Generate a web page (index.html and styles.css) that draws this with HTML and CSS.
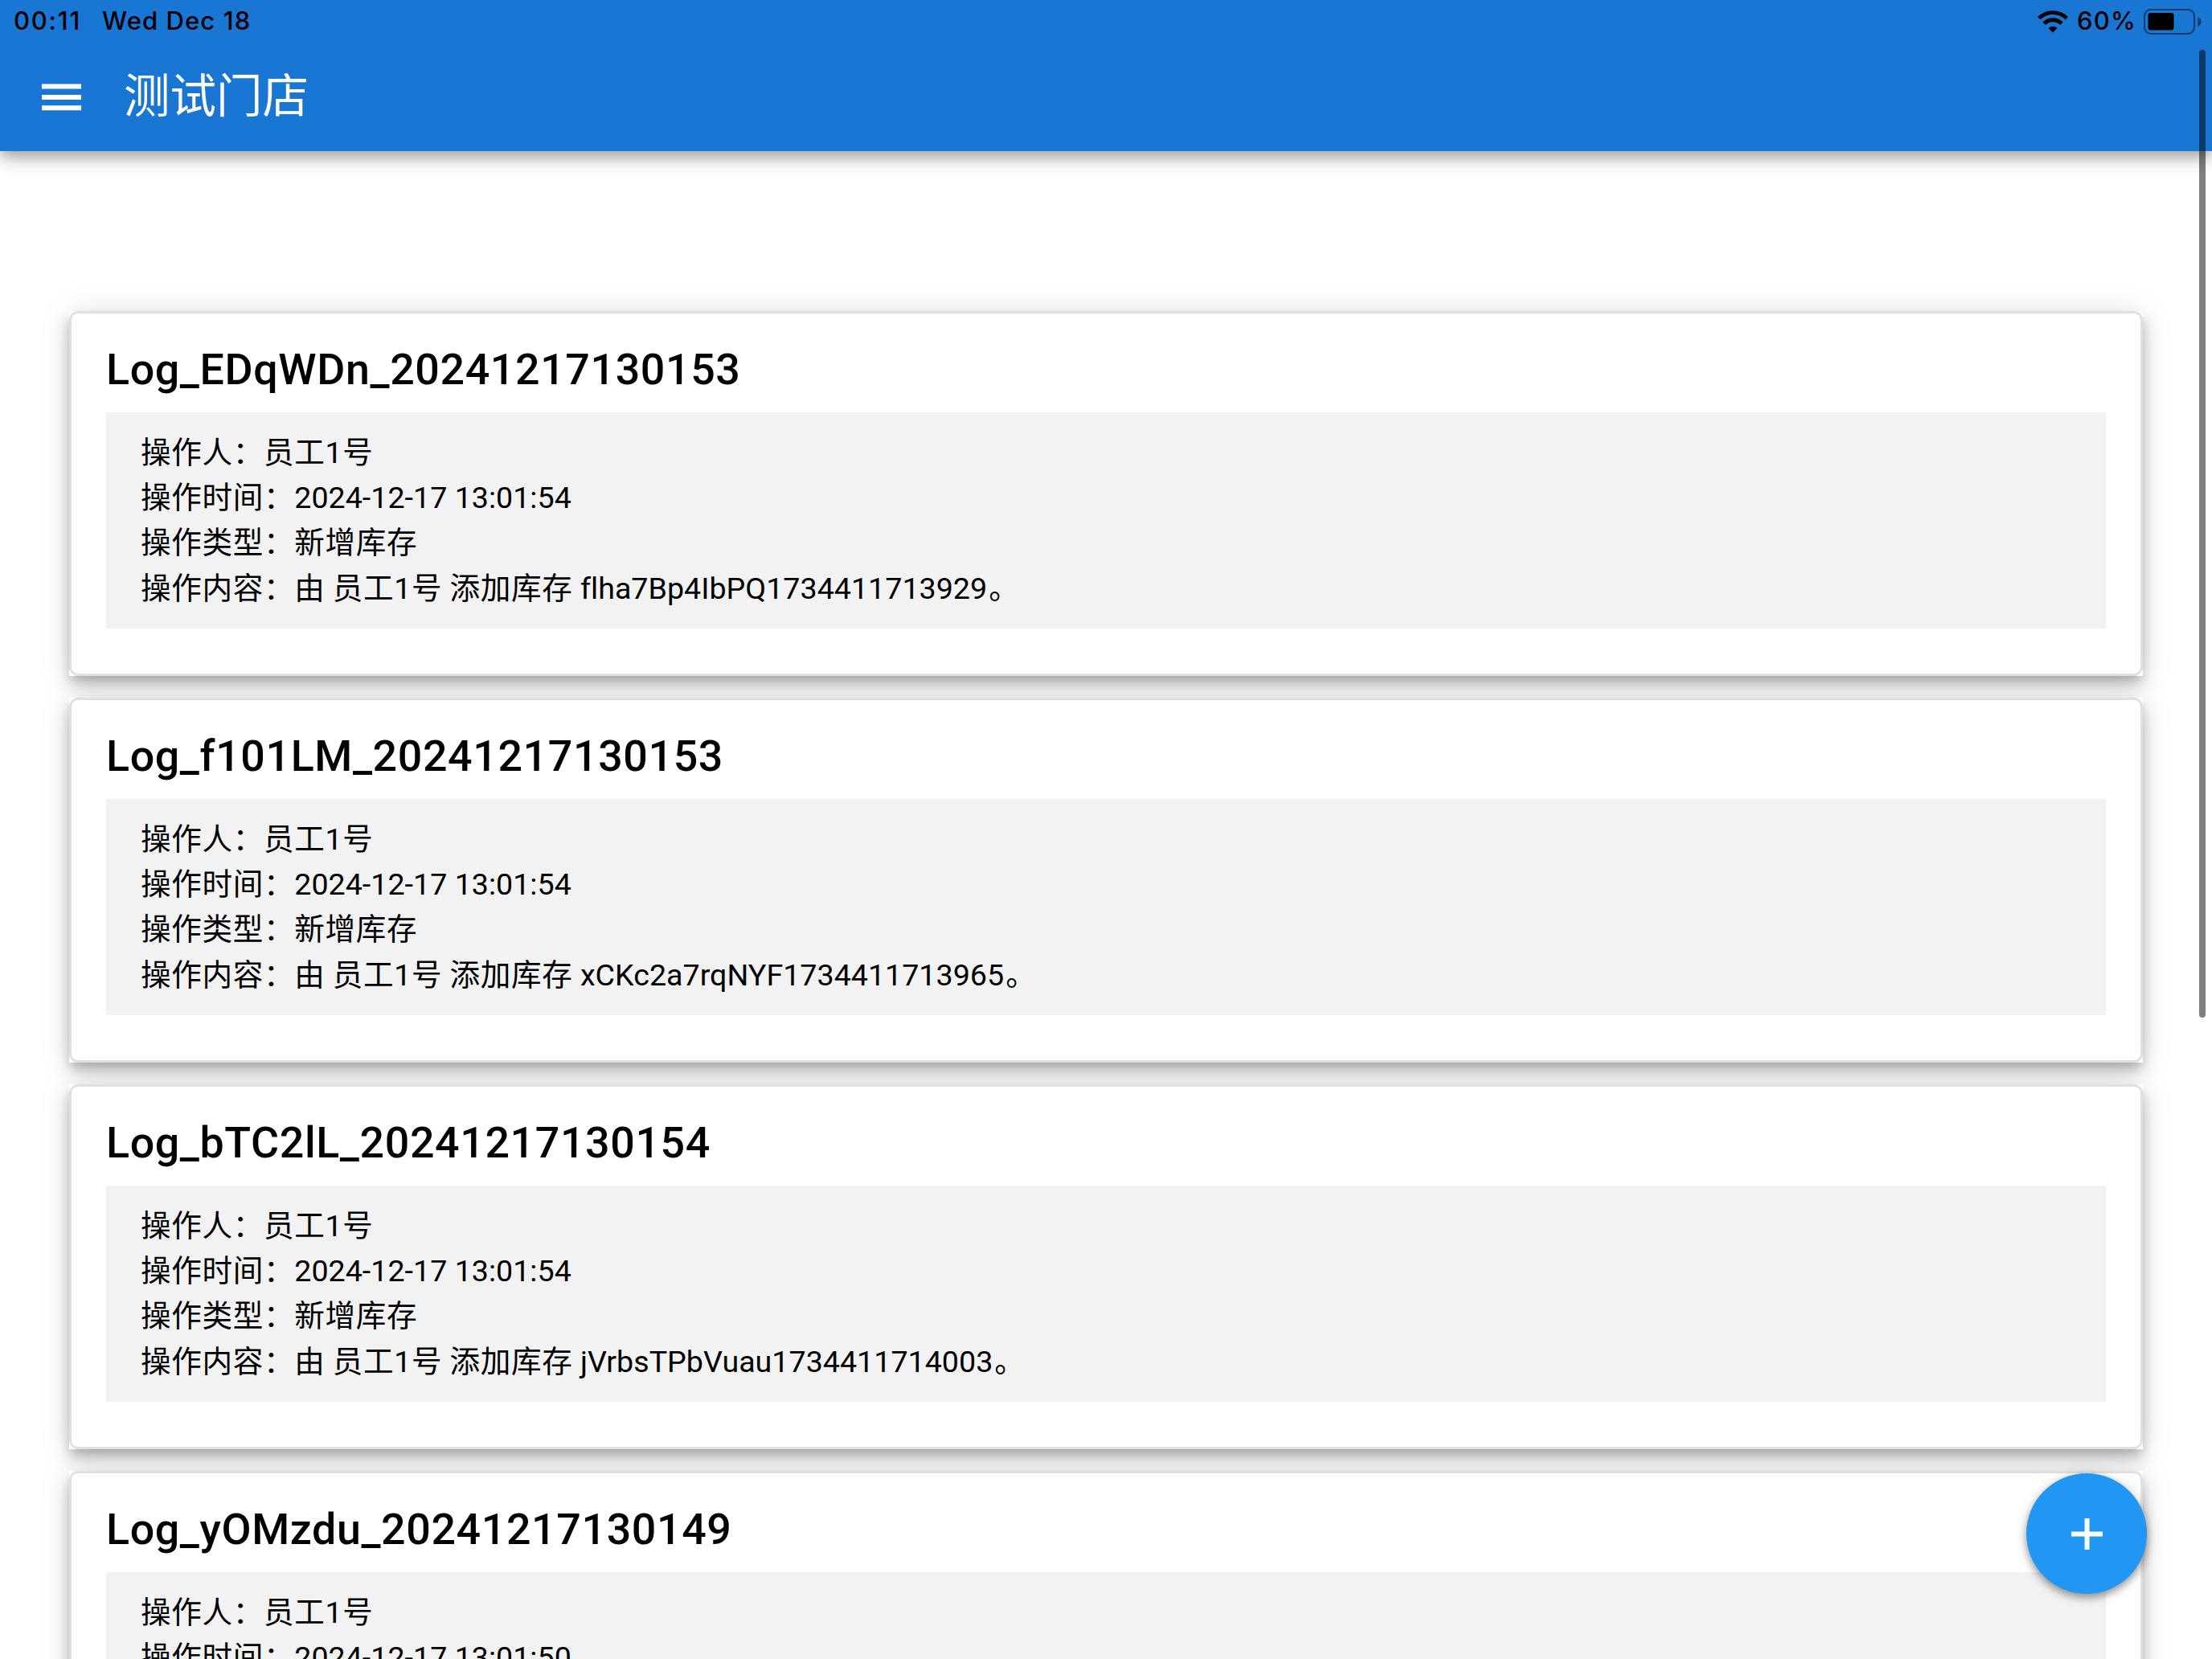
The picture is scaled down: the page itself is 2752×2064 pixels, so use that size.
FILE: index.html
```html
<!DOCTYPE html>
<html lang="zh-CN">
<head>
  <meta charset="UTF-8">
  <meta name="viewport" content="width=device-width, initial-scale=1.0">
  <title>测试门店</title>
  <link rel="stylesheet" href="styles.css">
</head>
<body>
  <header class="header">
    <div class="status-bar">
      <span class="time">00:11</span>
      <span class="date">Wed Dec 18</span>
      <svg class="wifi" width="38" height="28" viewBox="0 0 38 28">
        <g fill="none" stroke="#000" stroke-width="4.8">
          <path d="M1.800 9.800a24.300 24.300 0 0 1 34.400 0"/>
          <path d="M8 16.300a15.600 15.600 0 0 1 22 0"/>
        </g>
        <path d="M19 27.400l-5.500-5.500a7.800 7.800 0 0 1 11 0z"/>
      </svg>
      <span class="percent">60%</span>
      <svg class="battery" width="72" height="32" viewBox="0 0 72 32">
        <rect x="1" y="1" width="62" height="30" rx="8" fill="none" stroke="#000" stroke-opacity=".5" stroke-width="2"/>
        <rect x="5.5" y="5" width="32" height="21.5" rx="3"/>
        <path d="M67.500 10.500c5.400 2 5.400 9.500 0 11.500z" fill-opacity=".5"/>
      </svg>
    </div>
    <div class="toolbar">
      <svg class="menu" width="50" height="34" viewBox="0 0 50 34" fill="#fff">
        <path d="M0 .5h49v6H0zM0 14h49v6H0zM0 27.200h49v6H0z"/>
      </svg>
      <h1>测试门店</h1>
    </div>
  </header>

  <main class="log-list">
    <div class="log-wrap">
      <div class="log-card">
        <h2>Log_EDqWDn_20241217130153</h2>
        <div class="log-content">
          <p>操作人：员工1号</p>
          <p>操作时间：<span class="value">2024-12-17 13:01:54</span></p>
          <p>操作类型：新增库存</p>
          <p>操作内容：由 员工1号 添加库存 <span class="value">flha7Bp4IbPQ1734411713929</span>。</p>
        </div>
      </div>
    </div>
    <div class="log-wrap">
      <div class="log-card">
        <h2>Log_f101LM_20241217130153</h2>
        <div class="log-content">
          <p>操作人：员工1号</p>
          <p>操作时间：<span class="value">2024-12-17 13:01:54</span></p>
          <p>操作类型：新增库存</p>
          <p>操作内容：由 员工1号 添加库存 <span class="value">xCKc2a7rqNYF1734411713965</span>。</p>
        </div>
      </div>
    </div>
    <div class="log-wrap">
      <div class="log-card">
        <h2>Log_bTC2lL_20241217130154</h2>
        <div class="log-content">
          <p>操作人：员工1号</p>
          <p>操作时间：<span class="value">2024-12-17 13:01:54</span></p>
          <p>操作类型：新增库存</p>
          <p>操作内容：由 员工1号 添加库存 <span class="value">jVrbsTPbVuau1734411714003</span>。</p>
        </div>
      </div>
    </div>
    <div class="log-wrap">
      <div class="log-card">
        <h2>Log_yOMzdu_20241217130149</h2>
        <div class="log-content">
          <p>操作人：员工1号</p>
          <p>操作时间：<span class="value">2024-12-17 13:01:50</span></p>
        </div>
      </div>
    </div>
  </main>

  <button class="fab" aria-label="add">
    <svg width="39" height="39" viewBox="0 0 39 39" fill="#fff">
      <path d="M16.500 0h6v16.500H39v6H22.500V39h-6V22.500H0v-6h16.500z"/>
    </svg>
  </button>
  <div class="scrollbar"></div>
</body>
</html>
```

FILE: styles.css
```css
* {
  box-sizing: border-box;
}
body {
  margin: 0;
  height: 2064px;
  overflow: hidden;
  position: relative;
  background: #fff;
  color: #000;
  font-family: Roboto, "Noto Sans CJK SC", sans-serif;
}
h1, h2, p {
  margin: 0;
}

/* header */
.header {
  position: relative;
  z-index: 1;
  height: 188px;
  background: #1976d2;
  box-shadow: 0 8px 14px -2px rgba(0, 0, 0, 0.2), 0 13px 20px rgba(0, 0, 0, 0.14), 0 3px 27px rgba(0, 0, 0, 0.08);
}
.status-bar {
  display: flex;
  align-items: center;
  height: 54px;
  padding: 0 13px 0 17px;
  font-family: Inter, sans-serif;
  font-size: 31px;
  line-height: 36px;
  font-weight: 450;
}
.status-bar span {
  padding-bottom: 2px;
}
.time {
  width: 110px;
  letter-spacing: 1.8px;
}
.date {
  letter-spacing: 1.1px;
}
.wifi {
  margin-left: auto;
}
.percent {
  width: 71px;
  margin: 0 12px 0 11px;
  letter-spacing: 1.2px;
  white-space: nowrap;
}
.toolbar {
  display: flex;
  align-items: center;
  height: 134px;
  padding-left: 52px;
}
.toolbar h1 {
  margin-left: 52px;
  color: #fff;
  font-size: 57.5px;
  font-weight: 400;
  line-height: 80px;
}

/* log list */
.log-list {
  position: relative;
  isolation: isolate;
  display: flex;
  flex-direction: column;
  gap: 27px;
  padding: 199px 86px 0;
}
.log-wrap {
  position: relative;
  flex: none;
  height: 454px;
  background: #fff;
}
/* shadow sits below every card so neighbours stay clean */
.log-wrap::before {
  content: "";
  position: absolute;
  inset: 0;
  z-index: -1;
  box-shadow: 0 8px 13px -3px rgba(0, 0, 0, 0.2), 0 13px 21px rgba(0, 0, 0, 0.14), 0 3px 38px rgba(0, 0, 0, 0.12);
}
.log-card {
  height: 100%;
  padding: 38px 43px 40px;
  border: 3px solid #e0e0e0;
  border-radius: 11px;
}
.log-card h2 {
  height: 85px;
  font-size: 53.75px;
  font-weight: 500;
  line-height: 63px;
  letter-spacing: 0.62px;
}
.log-content {
  height: 269px;
  padding: 21.5px 43px;
  background: #f2f2f2;
  font-size: 37.6px;
  line-height: 56.4px;
  letter-spacing: 0.67px;
  word-spacing: -0.7px;
}
.log-content p {
  height: 56.4px;
}
.value {
  margin-right: 2px;
  letter-spacing: 0.03px;
  word-spacing: 0;
  font-variant-ligatures: common-ligatures;
}

.fab {
  position: absolute;
  left: 2521px;
  top: 1833px;
  z-index: 2;
  display: flex;
  align-items: center;
  justify-content: center;
  width: 150px;
  height: 150px;
  padding: 0;
  border: none;
  border-radius: 50%;
  background: #2196f3;
  box-shadow: 0 5px 8px rgba(0, 0, 0, 0.28), 0 3px 16px rgba(0, 0, 0, 0.2);
}
.scrollbar {
  position: absolute;
  left: 2736px;
  top: 62px;
  z-index: 3;
  width: 8px;
  height: 1204px;
  border-radius: 4px;
  background: rgba(0, 0, 0, 0.5);
}
```
